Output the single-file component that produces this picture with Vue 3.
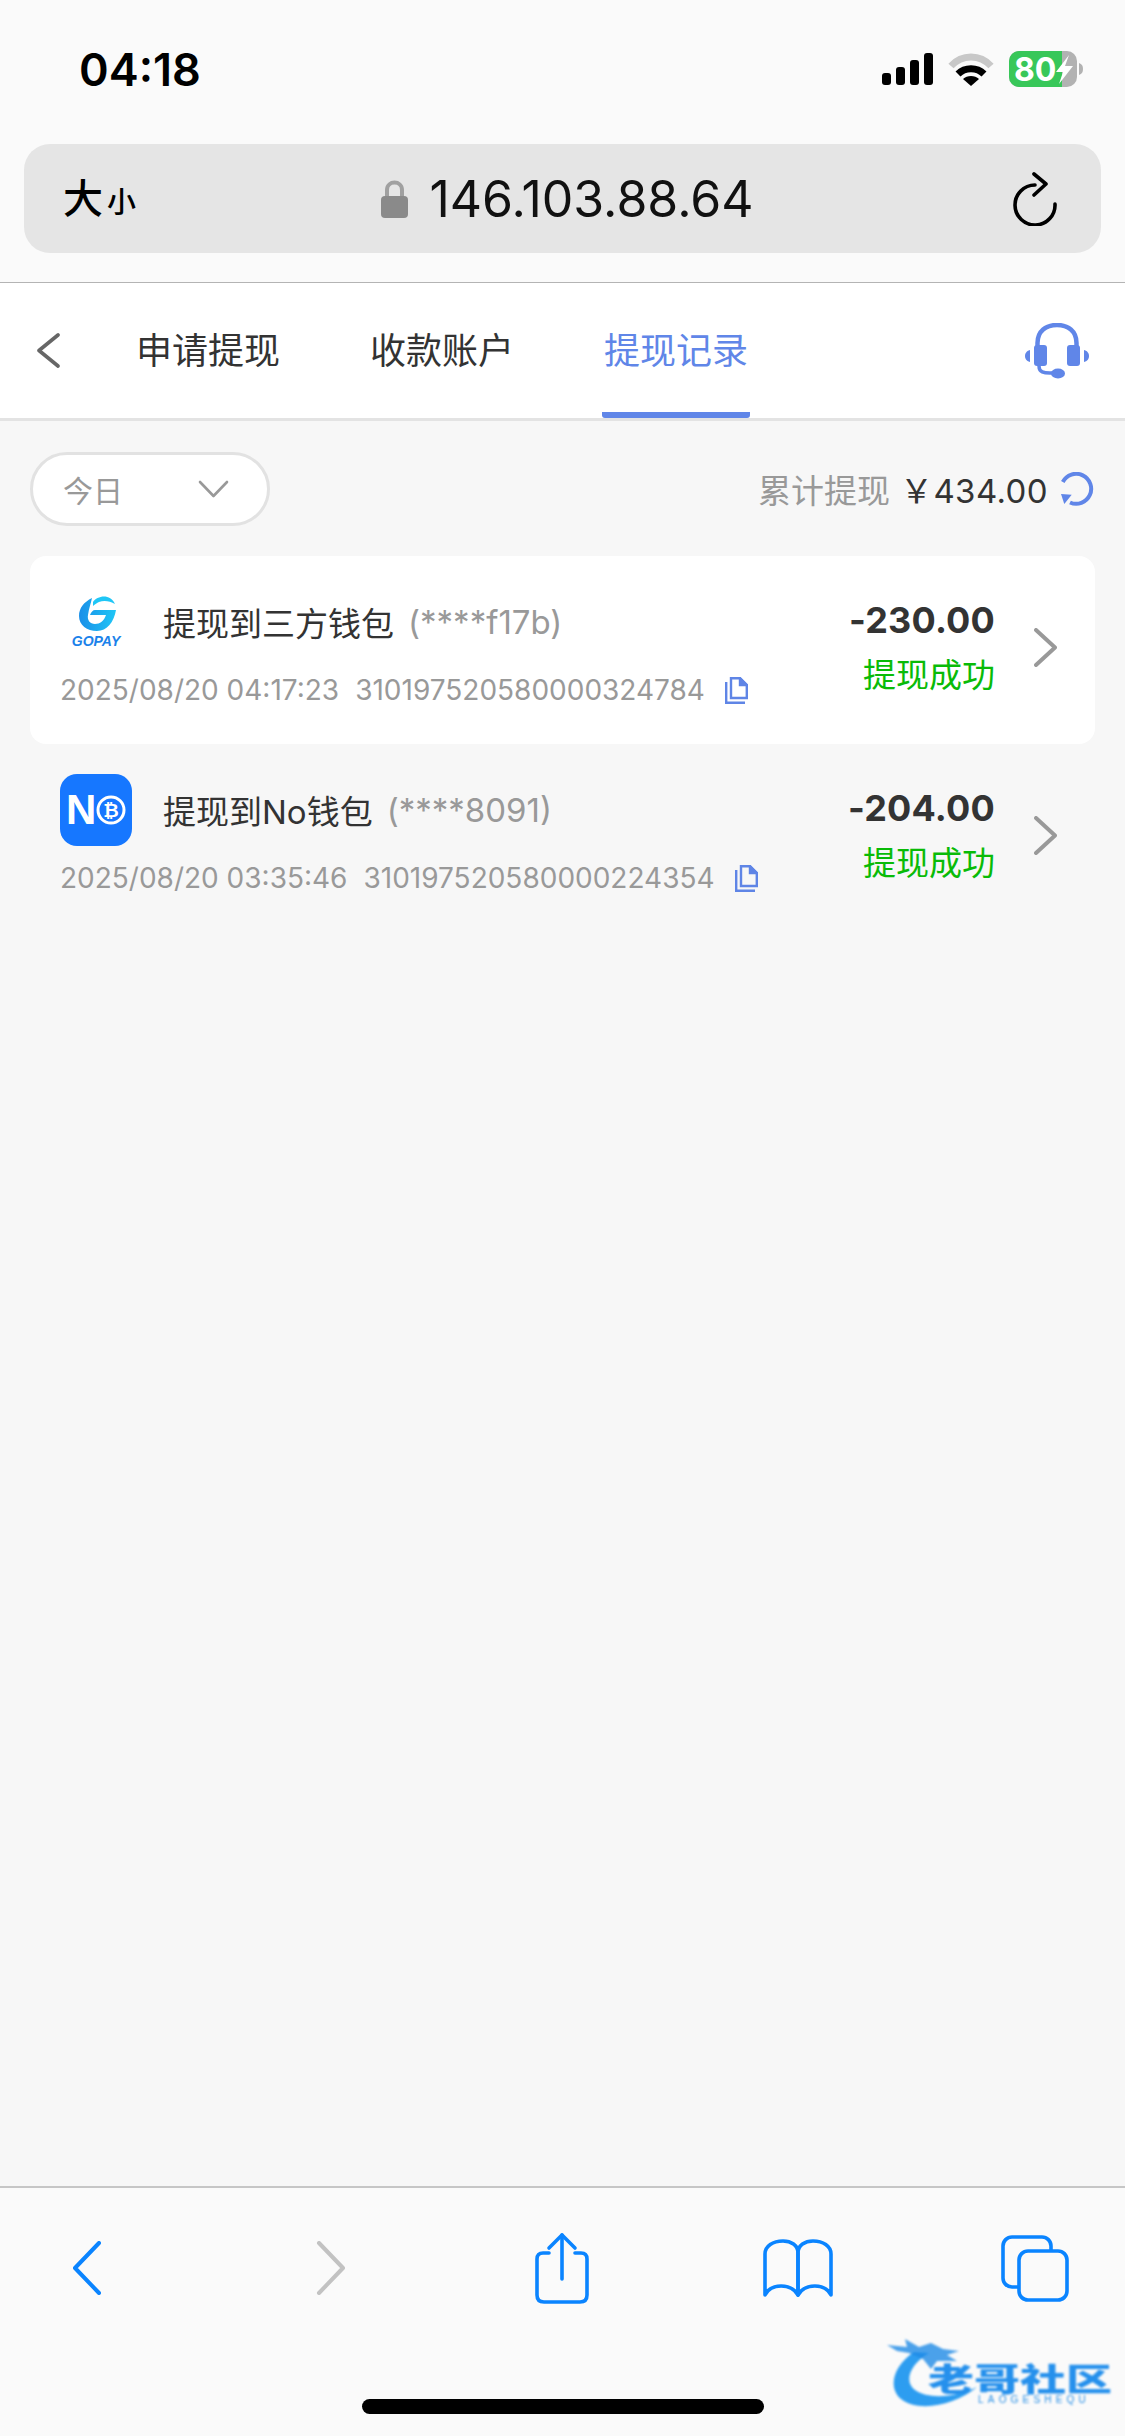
<script setup>
import { ref } from 'vue';

const tabs = ['申请提现', '收款账户', '提现记录'];
const activeTab = ref(2);

const records = [
  {
    id: 1,
    logo: 'gopay',
    title: '提现到三方钱包',
    account: '(****f17b)',
    time: '2025/08/20 04:17:23',
    orderNo: '310197520580000324784',
    amount: '-230.00',
    status: '提现成功',
  },
  {
    id: 2,
    logo: 'no',
    title: '提现到No钱包',
    account: '(****8091)',
    time: '2025/08/20 03:35:46',
    orderNo: '310197520580000224354',
    amount: '-204.00',
    status: '提现成功',
  },
];
</script>

<template>
  <div class="page">
    <header class="browser-top">
      <div class="statusbar">
        <span class="clock">04:18</span>
        <div class="status-icons">
          <svg width="51" height="32" viewBox="0 0 51 32">
            <rect x="0" y="20" width="9" height="12" rx="3" />
            <rect x="14" y="14" width="9" height="18" rx="3" />
            <rect x="28" y="7" width="9" height="25" rx="3" />
            <rect x="42" y="0" width="9" height="32" rx="3" />
          </svg>
          <svg class="wifi" width="46" height="33" viewBox="0 0 46 33">
            <path d="M3 13 C14 1 32 1 43 13" fill="none" stroke="#c8c8c8" stroke-width="7" />
            <path d="M10 21 C17 14 29 14 36 21" fill="none" stroke="#000" stroke-width="7" />
            <path d="M23 33 L15 26 C19 22 27 22 31 26 Z" fill="#000" />
          </svg>
          <svg class="battery" width="74" height="36" viewBox="0 0 74 36">
            <rect x="0" y="0" width="68" height="36" rx="10" fill="#b2b2b2" />
            <path d="M10 0 H53 V36 H10 A10 10 0 0 1 0 26 V10 A10 10 0 0 1 10 0 Z" fill="#38c759" />
            <path d="M70 12 C73 13 74 15 74 18 C74 21 73 23 70 24 Z" fill="#b2b2b2" />
            <text x="5" y="30" class="battery-text">80</text>
            <path d="M60 4 L47 21 H54 L50 33 L64 15 H56 Z" fill="#fff" />
          </svg>
        </div>
      </div>
      <div class="urlbar">
        <span class="text-size">大<small>小</small></span>
        <div class="address">
          <svg width="27" height="39" viewBox="0 0 27 39">
            <path d="M6 18 V11 C6 1 21 1 21 11 V18" fill="none" stroke="#a0a0a0" stroke-width="4" />
            <rect x="0" y="17" width="27" height="22" rx="4" fill="#8a8a8a" />
          </svg>
          <span class="host">146.103.88.64</span>
        </div>
        <svg class="reload" width="44" height="54" viewBox="0 0 44 54" fill="none" stroke="#000" stroke-width="3.6" stroke-linecap="round" stroke-linejoin="round">
          <path d="M22 13 A20 20 0 1 0 42 32" />
          <path d="M21 2 L33 12 L21 23" />
        </svg>
      </div>
    </header>

    <nav class="tabbar">
      <svg class="nav-back" width="24" height="35" viewBox="0 0 24 35" fill="none" stroke="#666" stroke-width="3.6" stroke-linecap="round" stroke-linejoin="round">
        <path d="M22 2 L3 17.5 L22 33" />
      </svg>
      <div class="tabs">
        <div
          v-for="(tab, i) in tabs"
          :key="tab"
          class="tab"
          :class="{ active: i === activeTab }"
        >
          {{ tab }}
        </div>
      </div>
      <svg class="support" width="64" height="56" viewBox="0 0 64 56" fill="#6086e8">
        <path d="M12.5 24 V20 C12.5 8 21 2 32 2 C43 2 51.5 8 51.5 20 V24" fill="none" stroke="#6086e8" stroke-width="4.5" />
        <rect x="9" y="22" width="13" height="21" rx="3" />
        <rect x="42" y="22" width="13" height="21" rx="3" />
        <path d="M5 27 V39 C1 38 0 35 0 33 C0 31 1 28 5 27 Z" />
        <path d="M59 27 V39 C63 38 64 35 64 33 C64 31 63 28 59 27 Z" />
        <path d="M14 43 C14 49 18 50.5 28 50" fill="none" stroke="#6086e8" stroke-width="3.5" />
        <ellipse cx="33" cy="50.5" rx="7" ry="5" />
      </svg>
    </nav>

    <main class="content">
      <div class="filter-row">
        <div class="range-select">
          <span>今日</span>
          <svg width="31" height="18" viewBox="0 0 31 18" fill="none" stroke="#999" stroke-width="2.6" stroke-linecap="round" stroke-linejoin="round">
            <path d="M2 2 L15.5 16 L29 2" />
          </svg>
        </div>
        <div class="total">
          <span class="total-label">累计提现</span>
          <span class="total-value">￥434.00</span>
          <svg width="34" height="34" viewBox="0 0 34 34" fill="none" stroke="#6086e8" stroke-width="4">
            <path d="M2.8 10 A15 15 0 1 1 10 30.5" />
            <path d="M1 22 L11.7 22.7 L4.3 32 Z" fill="#6086e8" stroke="none" />
          </svg>
        </div>
      </div>

      <div class="records">
        <div v-for="item in records" :key="item.id" class="record">
          <div class="record-main">
            <div class="record-head">
              <div v-if="item.logo === 'gopay'" class="logo-gopay">
                <svg width="37" height="36" viewBox="0 0 37 36">
                  <defs>
                    <linearGradient id="goGrad" x1="0" y1="0" x2="1" y2="0">
                      <stop offset="0" stop-color="#1a8fe8" />
                      <stop offset="1" stop-color="#1fc6f6" />
                    </linearGradient>
                  </defs>
                  <path fill="url(#goGrad)" d="M13 3 C5 7 0 13 0 21 C0 30 8 36 18 36 C28 36 35 27 37 15 H16 C14 15 12 17 11 20 H27 C25 26 21 29 16 29 C11 29 8 25 9 20 C10 13 12 8 13 3 Z" />
                  <path fill="#1fc6f6" d="M14 7 C18 1 31 -2 36 9 C31 6 25 5 20 7 C18 8 16 9 14 11 Z" />
                </svg>
                <span class="gopay-text">GOPAY</span>
              </div>
              <svg v-else class="logo-no" width="72" height="72" viewBox="0 0 72 72">
                <rect width="72" height="72" rx="17" fill="#1677ff" />
                <text x="6" y="50" class="no-letter">N</text>
                <circle cx="51" cy="36" r="13" fill="none" stroke="#fff" stroke-width="3" />
                <text x="51" y="43" text-anchor="middle" class="no-coin">₿</text>
              </svg>
              <span class="record-title">{{ item.title }}</span>
              <span class="record-account">{{ item.account }}</span>
            </div>
            <div class="record-meta">
              <span>{{ item.time }}</span>
              <span class="order-no">{{ item.orderNo }}</span>
              <svg class="copy" width="23" height="27" viewBox="0 0 23 27" fill="none" stroke="#5f85e6" stroke-width="2.4">
                <path d="M6 1.2 H15 L21.8 8 V21 H6 Z" />
                <path d="M15 1.2 V8 H21.8 Z" fill="#5f85e6" />
                <path d="M1.2 5 V25.8 H20" />
              </svg>
            </div>
          </div>
          <div class="record-side">
            <span class="amount">{{ item.amount }}</span>
            <span class="status">{{ item.status }}</span>
          </div>
          <svg class="record-arrow" width="23" height="39" viewBox="0 0 23 39" fill="none" stroke="#999" stroke-width="4" stroke-linecap="round" stroke-linejoin="round">
            <path d="M2 2 L21 19.5 L2 37" />
          </svg>
        </div>
      </div>
    </main>

    <footer class="toolbar">
      <div class="toolbar-icons">
        <svg width="30" height="54" viewBox="0 0 30 54" fill="none" stroke="#0a84ff" stroke-width="4" stroke-linecap="round" stroke-linejoin="round">
          <path d="M27 2 L3 27 L27 52" />
        </svg>
        <svg width="30" height="54" viewBox="0 0 30 54" fill="none" stroke="#c2c2c2" stroke-width="4" stroke-linecap="round" stroke-linejoin="round">
          <path d="M3 2 L27 27 L3 52" />
        </svg>
        <svg width="56" height="72" viewBox="0 0 56 72" fill="none" stroke="#0a84ff" stroke-width="3.6" stroke-linecap="round" stroke-linejoin="round">
          <path d="M15 21 H9 Q3 21 3 27 V63 Q3 70 10 70 H46 Q53 70 53 63 V27 Q53 21 47 21 H41" />
          <path d="M28 3 V47" />
          <path d="M15 16 L28 3 L41 16" />
        </svg>
        <svg width="70" height="59" viewBox="0 0 70 59" fill="none" stroke="#0a84ff" stroke-width="3.6" stroke-linejoin="round">
          <path d="M35 56 V14 C35 6 28 2 20 2 C10 2 2 7 2 15 V56 C8 44 28 44 35 56 Z" />
          <path d="M35 56 V14 C35 6 42 2 50 2 C60 2 68 7 68 15 V56 C62 44 42 44 35 56 Z" />
        </svg>
        <svg width="68" height="67" viewBox="0 0 68 67" fill="#fafafa" stroke="#0a84ff" stroke-width="3.6">
          <rect x="2" y="2" width="48" height="50" rx="9" />
          <rect x="18" y="16" width="48" height="49" rx="9" />
        </svg>
      </div>
      <div class="home-bar"></div>
    </footer>

    <div class="watermark">
      <svg class="dragon" width="92" height="73" viewBox="0 0 92 73">
        <path fill="#2d9df0" d="M27 17 C7 30 0 52 14 64 C32 78 68 70 90 52 C70 62 42 65 28 55 C17 47 22 30 42 18 Z" />
        <path fill="#1f8be6" opacity="0.8" d="M0 10 L20 12 L18 4 L32 12 L44 8 L56 14 L72 16 L60 20 L70 26 L50 26 L44 34 L36 24 L22 18 L10 16 Z" />
      </svg>
      <span class="wm-title">老哥社区</span>
      <span class="wm-sub">LAOGESHEQU</span>
    </div>
  </div>
</template>

<style scoped>
.page {
  position: relative;
  width: 1125px;
  height: 2436px;
  display: flex;
  flex-direction: column;
  overflow: hidden;
  background: #f7f7f7;
  font-family: Inter, "Noto Sans CJK SC", sans-serif;
  color: #333;
}

.browser-top {
  height: 283px;
  flex: none;
  box-sizing: border-box;
  background: #fafafa;
  border-bottom: 1px solid #b4b4b4;
}
.statusbar {
  height: 144px;
  box-sizing: border-box;
  padding: 0 42px 6px 79px;
  display: flex;
  align-items: center;
  justify-content: space-between;
}
.clock {
  font-size: 45px;
  font-weight: 600;
  color: #000;
}
.status-icons {
  display: flex;
  align-items: center;
  gap: 15px;
}
.battery {
  overflow: visible;
}
.battery-text {
  font-family: Inter, sans-serif;
  font-size: 32px;
  font-weight: 700;
  fill: #fff;
}
.urlbar {
  position: relative;
  height: 109px;
  margin: 0 24px;
  padding: 0 44px 0 39px;
  display: flex;
  align-items: center;
  justify-content: space-between;
  background: #e5e5e5;
  border-radius: 26px;
}
.text-size {
  font-size: 40px;
  font-weight: 500;
  color: #000;
  line-height: 1;
}
.text-size small {
  font-size: 29px;
  margin-left: 4px;
}
.address {
  display: flex;
  align-items: center;
  gap: 21px;
  margin-right: 14px;
}
.host {
  font-size: 50px;
  color: #111;
  line-height: 1;
}

.tabbar {
  height: 138px;
  flex: none;
  box-sizing: border-box;
  display: flex;
  align-items: center;
  padding: 0 36px;
  background: #fff;
  border-bottom: 3px solid #e3e3e3;
}
.nav-back {
  flex: none;
}
.tabs {
  flex: 1;
  align-self: stretch;
  display: flex;
  gap: 86px;
  margin-left: 74px;
}
.tab {
  display: flex;
  align-items: center;
  padding: 0 2px;
  font-size: 36px;
  color: #333;
  border-bottom: 6px solid transparent;
  box-sizing: border-box;
}
.tab.active {
  color: #6086e8;
  border-bottom-color: #6086e8;
  border-radius: 0 0 3px 3px;
}

.content {
  flex: 1;
  min-height: 0;
}
.filter-row {
  display: flex;
  align-items: center;
  justify-content: space-between;
  height: 135px;
  padding: 0 31px 0 30px;
  box-sizing: border-box;
}
.range-select {
  width: 240px;
  height: 74px;
  box-sizing: border-box;
  display: flex;
  align-items: center;
  justify-content: space-between;
  padding: 0 38px 0 30px;
  background: #fff;
  border: 3px solid #e2e2e2;
  border-radius: 37px;
  font-size: 30px;
  color: #999;
}
.total {
  display: flex;
  align-items: center;
  font-size: 33px;
}
.total-label {
  color: #999;
}
.total-value {
  margin-left: 10px;
  color: #333;
  letter-spacing: 0.4px;
}
.total svg {
  margin-left: 12px;
}

.records {
  margin: 0 30px;
}
.record {
  height: 188px;
  box-sizing: border-box;
  padding: 30px 38px 0 30px;
  display: flex;
  align-items: flex-start;
  border-radius: 16px;
}
.record:first-child {
  background: #fff;
}
.record-main {
  flex: 1;
  min-width: 0;
}
.record-head {
  height: 72px;
  display: flex;
  align-items: center;
}
.logo-gopay {
  width: 72px;
  height: 72px;
  flex: none;
  display: flex;
  flex-direction: column;
  align-items: center;
}
.logo-gopay svg {
  margin-top: 9px;
  margin-left: 3px;
}
.gopay-text {
  margin-top: 3px;
  font-family: "Liberation Sans", sans-serif;
  font-size: 14px;
  line-height: 15px;
  font-weight: 700;
  font-style: italic;
  color: #1b82ea;
}
.logo-no {
  flex: none;
}
.no-letter {
  font-family: "Liberation Sans", sans-serif;
  font-size: 42px;
  font-weight: 700;
  fill: #fff;
}
.no-coin {
  font-family: "DejaVu Sans", sans-serif;
  font-size: 19px;
  font-weight: 700;
  fill: #fff;
}
.record-title {
  margin-left: 31px;
  font-size: 33px;
  color: #333;
  white-space: nowrap;
}
.record-account {
  margin-left: 14px;
  font-size: 33px;
  color: #999;
  white-space: nowrap;
}
.record-meta {
  margin-top: 14px;
  height: 36px;
  display: flex;
  align-items: center;
  font-size: 28px;
  color: #999;
  white-space: nowrap;
}
.order-no {
  margin-left: 16px;
}
.copy {
  margin-left: 20px;
  flex: none;
}
.record-side {
  margin-top: 12px;
  display: flex;
  flex-direction: column;
  align-items: flex-end;
  gap: 11px;
}
.amount {
  height: 44px;
  line-height: 44px;
  font-size: 36px;
  font-weight: 700;
  color: #333;
  letter-spacing: 0.2px;
}
.status {
  height: 44px;
  line-height: 44px;
  font-size: 33px;
  color: #09bb07;
}
.record-arrow {
  flex: none;
  margin: 42px 0 0 39px;
}

.toolbar {
  height: 250px;
  flex: none;
  box-sizing: border-box;
  background: #fafafa;
  border-top: 2px solid #c6c6c6;
  display: flex;
  flex-direction: column;
}
.toolbar-icons {
  height: 116px;
  margin-top: 22px;
  padding-left: 72px;
  display: flex;
  align-items: center;
}
.toolbar-icons svg:nth-child(2) {
  margin-left: 214px;
}
.toolbar-icons svg:nth-child(3) {
  margin-left: 188px;
}
.toolbar-icons svg:nth-child(4) {
  margin-left: 173px;
}
.toolbar-icons svg:nth-child(5) {
  margin-left: 168px;
}
.home-bar {
  width: 402px;
  height: 15px;
  margin: 73px auto 0;
  background: #000;
  border-radius: 8px;
}

.watermark {
  position: absolute;
  left: 887px;
  top: 2335px;
  width: 220px;
  height: 73px;
  filter: blur(0.8px);
}
.dragon {
  position: absolute;
  left: 0;
  top: 0;
}
.wm-title {
  position: absolute;
  left: 41px;
  top: 27px;
  font-family: "Noto Sans CJK SC", sans-serif;
  font-size: 46px;
  line-height: 30px;
  font-weight: 900;
  white-space: nowrap;
  transform: scaleY(0.68);
  color: #2590ec;
}
.wm-sub {
  position: absolute;
  left: 91px;
  top: 60px;
  font-family: "Liberation Sans", sans-serif;
  font-size: 10px;
  line-height: 10px;
  letter-spacing: 4.2px;
  color: #2a90e6;
  white-space: nowrap;
}
</style>

<style>
html,
body {
  margin: 0;
  background: #f7f7f7;
}
</style>
